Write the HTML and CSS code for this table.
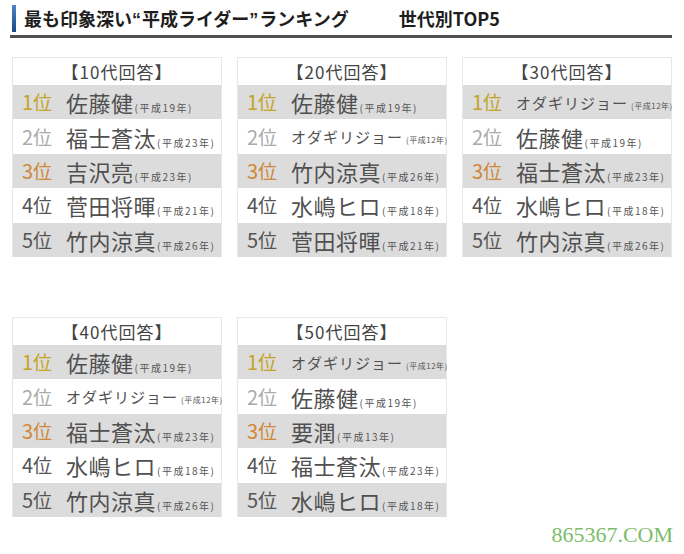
FILE: index.html
```html
<!DOCTYPE html>
<html lang="ja">
<head>
<meta charset="utf-8">
<title>平成ライダーランキング</title>
<link rel="stylesheet" href="styles.css">
</head>
<body>
<div class="page">
  <h1 class="title"><span class="title-bar"></span><span class="title-text">最も印象深い<span class="q">“</span>平成ライダー<span class="q">”</span>ランキング<span class="gap"></span>世代別TOP5</span></h1>

  <div class="grid">
    <div class="card">
      <div class="card-head">【10代回答】</div>
      <div class="row gray"><span class="rank r1">1<span class="i">位</span></span><span class="name">佐藤健<small>(平成19年)</small></span></div>
      <div class="row"><span class="rank r2">2<span class="i">位</span></span><span class="name">福士蒼汰<small>(平成23年)</small></span></div>
      <div class="row gray"><span class="rank r3">3<span class="i">位</span></span><span class="name">吉沢亮<small>(平成23年)</small></span></div>
      <div class="row"><span class="rank">4<span class="i">位</span></span><span class="name">菅田将暉<small>(平成21年)</small></span></div>
      <div class="row gray"><span class="rank">5<span class="i">位</span></span><span class="name">竹内涼真<small>(平成26年)</small></span></div>
    </div>

    <div class="card">
      <div class="card-head">【20代回答】</div>
      <div class="row gray"><span class="rank r1">1<span class="i">位</span></span><span class="name">佐藤健<small>(平成19年)</small></span></div>
      <div class="row"><span class="rank r2">2<span class="i">位</span></span><span class="name kana">オダギリジョー<small>(平成12年)</small></span></div>
      <div class="row gray"><span class="rank r3">3<span class="i">位</span></span><span class="name">竹内涼真<small>(平成26年)</small></span></div>
      <div class="row"><span class="rank">4<span class="i">位</span></span><span class="name">水嶋ヒロ<small>(平成18年)</small></span></div>
      <div class="row gray"><span class="rank">5<span class="i">位</span></span><span class="name">菅田将暉<small>(平成21年)</small></span></div>
    </div>

    <div class="card">
      <div class="card-head">【30代回答】</div>
      <div class="row gray"><span class="rank r1">1<span class="i">位</span></span><span class="name kana">オダギリジョー<small>(平成12年)</small></span></div>
      <div class="row"><span class="rank r2">2<span class="i">位</span></span><span class="name">佐藤健<small>(平成19年)</small></span></div>
      <div class="row gray"><span class="rank r3">3<span class="i">位</span></span><span class="name">福士蒼汰<small>(平成23年)</small></span></div>
      <div class="row"><span class="rank">4<span class="i">位</span></span><span class="name">水嶋ヒロ<small>(平成18年)</small></span></div>
      <div class="row gray"><span class="rank">5<span class="i">位</span></span><span class="name">竹内涼真<small>(平成26年)</small></span></div>
    </div>

    <div class="card">
      <div class="card-head">【40代回答】</div>
      <div class="row gray"><span class="rank r1">1<span class="i">位</span></span><span class="name">佐藤健<small>(平成19年)</small></span></div>
      <div class="row"><span class="rank r2">2<span class="i">位</span></span><span class="name kana">オダギリジョー<small>(平成12年)</small></span></div>
      <div class="row gray"><span class="rank r3">3<span class="i">位</span></span><span class="name">福士蒼汰<small>(平成23年)</small></span></div>
      <div class="row"><span class="rank">4<span class="i">位</span></span><span class="name">水嶋ヒロ<small>(平成18年)</small></span></div>
      <div class="row gray"><span class="rank">5<span class="i">位</span></span><span class="name">竹内涼真<small>(平成26年)</small></span></div>
    </div>

    <div class="card">
      <div class="card-head">【50代回答】</div>
      <div class="row gray"><span class="rank r1">1<span class="i">位</span></span><span class="name kana">オダギリジョー<small>(平成12年)</small></span></div>
      <div class="row"><span class="rank r2">2<span class="i">位</span></span><span class="name">佐藤健<small>(平成19年)</small></span></div>
      <div class="row gray"><span class="rank r3">3<span class="i">位</span></span><span class="name">要潤<small>(平成13年)</small></span></div>
      <div class="row"><span class="rank">4<span class="i">位</span></span><span class="name">福士蒼汰<small>(平成23年)</small></span></div>
      <div class="row gray"><span class="rank">5<span class="i">位</span></span><span class="name">水嶋ヒロ<small>(平成18年)</small></span></div>
    </div>
  </div>

  <div class="watermark">865367.COM</div>
</div>
</body>
</html>
```

FILE: styles.css
```css
* { box-sizing: border-box; }

html, body {
  margin: 0;
  padding: 0;
  background: #ffffff;
}

body {
  font-family: "Noto Sans CJK JP", "Noto Sans", sans-serif;
  color: #555555;
}

.page {
  position: relative;
  width: 684px;
  height: 554px;
  padding: 5px 12px 0 10px;
}

.title {
  display: flex;
  align-items: stretch;
  margin: 0;
  height: 33px;
  border-bottom: 3px solid #505050;
  font-size: 18px;
  font-weight: 700;
  color: #1e1e1e;
  line-height: 1;
}

.title-bar {
  width: 4px;
  height: 27px;
  margin-left: 2px;
  background: linear-gradient(#4a86c8, #1a4a86);
}

.title-text {
  padding-left: 8px;
  padding-top: 4px;
  white-space: nowrap;
}

.title-text .q {
  font-family: "Liberation Sans", sans-serif;
  font-weight: 700;
  margin-right: 1px;
}

.title-text .gap {
  display: inline-block;
  width: 50px;
}

.grid {
  display: grid;
  grid-template-columns: repeat(3, 210px);
  column-gap: 15px;
  row-gap: 60px;
  margin-top: 19px;
  margin-left: 2px;
}

.card {
  border: 1px solid #e8e8e8;
  background: #ffffff;
  height: 200px;
}

.card-head {
  height: 27px;
  text-align: center;
  font-size: 17px;
  letter-spacing: 1px;
  line-height: 27px;
  color: #444444;
}

.row {
  display: flex;
  align-items: center;
  height: 34.4px;
  padding-left: 9px;
  white-space: nowrap;
}

.row.gray {
  background: #dcdcdc;
}

.rank {
  width: 44px;
  flex: none;
  font-size: 20px;
  line-height: 1;
  color: #555555;
}

.rank .i {
  font-size: 19px;
}

.rank.r1 { color: #c4a424; }
.rank.r2 { color: #aaaaaa; }
.rank.r3 { color: #cf8838; }

.name {
  font-size: 22px;
  line-height: 1;
  color: #505050;
  letter-spacing: 0.5px;
}

.name small {
  font-size: 10px;
  letter-spacing: 1.5px;
  margin-left: 1px;
  color: #555555;
}

.name.kana {
  font-size: 15px;
  letter-spacing: 1px;
}

.name.kana small {
  font-size: 8px;
  letter-spacing: 0.5px;
  margin-left: 3px;
}

.watermark {
  position: absolute;
  right: 11px;
  bottom: 6px;
  font-family: "Liberation Serif", "DejaVu Serif", serif;
  font-size: 22px;
  color: #7dbd6a;
}
```
